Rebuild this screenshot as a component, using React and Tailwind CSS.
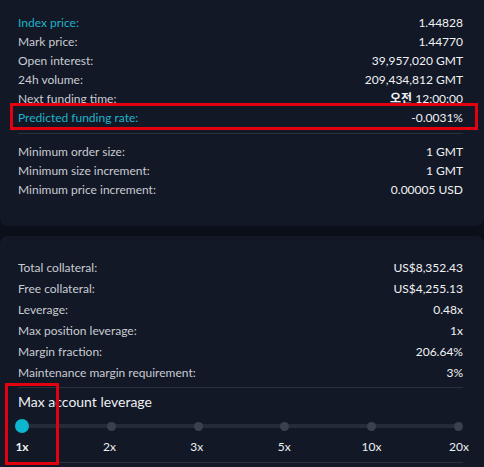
const market = [
  { label: 'Index price:', value: '1.44828', accent: true },
  { label: 'Mark price:', value: '1.44770' },
  { label: 'Open interest:', value: '39,957,020 GMT' },
  { label: '24h volume:', value: '209,434,812 GMT' },
  { label: 'Next funding time:', value: <><span className="font-bold">오전</span> 12:00:00</> },
]

const limits = [
  { label: 'Minimum order size:', value: '1 GMT' },
  { label: 'Minimum size increment:', value: '1 GMT' },
  { label: 'Minimum price increment:', value: '0.00005 USD' },
]

const account = [
  { label: 'Total collateral:', value: 'US$8,352.43' },
  { label: 'Free collateral:', value: 'US$4,255.13' },
  { label: 'Leverage:', value: '0.48x' },
  { label: 'Max position leverage:', value: '1x' },
  { label: 'Margin fraction:', value: '206.64%' },
  { label: 'Maintenance margin requirement:', value: '3%' },
]

const steps = ['1x', '2x', '3x', '5x', '10x', '20x']

export default function App() {
  return (
    <div className="w-[484px] h-[467px] overflow-hidden bg-[#0b0f19] text-[12px] text-[#c9ccd2]" style={{ fontFamily: 'Lato, "Noto Sans CJK KR", sans-serif' }}>
      <section className="bg-[#121826] rounded-b-[8px] pl-[18px] pr-[21px] pt-[13px] pb-[27px]">
        {market.map((r) => (
          <Row key={r.label} {...r} h="h-[19px]" />
        ))}
        <div className="relative">
          <Row label="Predicted funding rate:" value="-0.0031%" accent h="h-[19px]" />
          <div className="absolute left-[-8px] right-[-15px] top-[-5px] bottom-[-3px] border-[3px] border-[#e3000f]" />
        </div>
        <div className="mt-[6px] mb-[8px] h-px bg-[#2a303c]" />
        {limits.map((r) => (
          <Row key={r.label} {...r} h="h-[19px]" />
        ))}
      </section>

      <section className="mt-[10px] bg-[#121826] rounded-t-[8px] pl-[18px] pr-[21px] pt-[21px] h-[231px]">
        {account.map((r) => (
          <Row key={r.label} {...r} h="h-[21px]" />
        ))}
        <div className="mt-[4px] h-px bg-[#2a303c]" />
        <div className="relative">
          <div className="pt-[4px] mb-[3px] text-[14px] leading-[20px] text-[#eef0f3]">Max account leverage</div>
          <div className="relative h-[22px] mx-[4px]">
            <div className="absolute left-0 right-0 top-[9px] h-[4px] rounded-full bg-[#262c37]" />
            <div className="relative flex justify-between items-center h-full">
              {steps.map((s, i) =>
                i === 0 ? (
                  <span key={s} className="w-[14px] h-[14px] rounded-full bg-[#0db6cf] -ml-[7px]" />
                ) : (
                  <span key={s} className={`w-[9px] h-[9px] rounded-full bg-[#3b414c] ${i === steps.length - 1 ? '-mr-[4px]' : ''}`} />
                )
              )}
            </div>
          </div>
          <div className="h-[20px] mx-[4px] text-[#eef0f3]">
            <div className="flex justify-between leading-[20px]">
              {steps.map((s, i) => (
                <span key={s} className={`w-0 flex justify-center ${i === 0 ? 'font-bold' : ''}`}>
                  <span className="whitespace-nowrap">{s}</span>
                </span>
              ))}
            </div>
          </div>
          <div className="mt-[5px] h-px bg-[#2a303c]" />
          <div className="absolute left-[-13px] w-[54px] top-[-5px] h-[82px] border-[3px] border-[#e3000f]" />
        </div>
      </section>
    </div>
  )
}

function Row({ label, value, accent, h }) {
  return (
    <div className={`flex items-center justify-between ${h}`}>
      <span className={accent ? 'text-[#1fb3c9]' : ''}>{label}</span>
      <span className="text-[#f1f2f4]">{value}</span>
    </div>
  )
}
